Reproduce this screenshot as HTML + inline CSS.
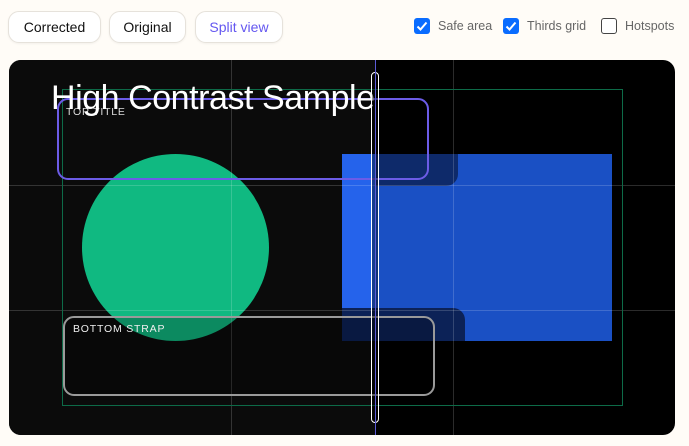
<!DOCTYPE html>
<html><head><style>
*{margin:0;padding:0;box-sizing:border-box}
body{width:689px;height:446px;background:#fffcf7;font-family:"Liberation Sans",sans-serif;position:relative;overflow:hidden}
.btn{position:absolute;top:11px;height:32px;border:1px solid #e6e2db;border-radius:11px;background:#fff;font-size:14px;line-height:30px;text-align:center;color:#111;box-shadow:0 1px 2px rgba(0,0,0,.05)}
.cb{position:absolute;top:18px;width:16px;height:16px;border-radius:3px}
.cb.on{background:#0a6cff}
.cb.off{border:1.5px solid #444;background:#fff}
.lbl{position:absolute;top:19px;font-size:12.5px;color:#666}
.a{position:absolute}
</style></head><body>
<div class="btn" style="left:8px;width:93px">Corrected</div>
<div class="btn" style="left:109px;width:77px">Original</div>
<div class="btn" style="left:195px;width:88px;color:#6457f0">Split view</div>
<div class="cb on" style="left:414px"><svg width="16" height="16"><path d="M3.5 8.5l3 3 6-7" stroke="#fff" stroke-width="2" fill="none"/></svg></div>
<div class="lbl" style="left:438px">Safe area</div>
<div class="cb on" style="left:503px"><svg width="16" height="16"><path d="M3.5 8.5l3 3 6-7" stroke="#fff" stroke-width="2" fill="none"/></svg></div>
<div class="lbl" style="left:527px">Thirds grid</div>
<div class="cb off" style="left:601px"></div>
<div class="lbl" style="left:625px">Hotspots</div>

<div class="a" style="left:9px;top:60px;width:666px;height:375px;border-radius:12px;overflow:hidden;background:#000">
  <div class="a" style="left:0;top:0;width:366px;height:375px;background:#0b0b0b"></div>
  <div class="a" style="left:73px;top:94px;width:187px;height:187px;border-radius:50%;background:#10b981"></div>
  <div class="a" style="left:333px;top:94px;width:270px;height:187px;background:#1a50c4"></div>
  <div class="a" style="left:333px;top:94px;width:33px;height:187px;background:#2563eb"></div>
  <div class="a" style="left:366px;top:94px;width:83px;height:32px;background:#0e2a6a;border-radius:0 0 12px 0"></div>
  <div class="a" style="left:333px;top:248px;width:123px;height:33px;background:#0c2257;border-radius:0 12px 0 0"></div>
  <div class="a" style="left:222px;top:0;width:1px;height:375px;background:rgba(255,255,255,.17)"></div>
  <div class="a" style="left:444px;top:0;width:1px;height:375px;background:rgba(255,255,255,.17)"></div>
  <div class="a" style="left:0;top:125px;width:666px;height:1px;background:rgba(255,255,255,.17)"></div>
  <div class="a" style="left:0;top:250px;width:666px;height:1px;background:rgba(255,255,255,.17)"></div>
  <div class="a" style="left:53px;top:29px;width:561px;height:317px;border:1px solid #0d6b48"></div>
  <div class="a" style="left:54px;top:256px;width:372px;height:80px;border:2px solid #9a9a9a;border-radius:11px;background:rgba(0,0,0,.25)"></div>
  <div class="a" style="left:64px;top:263px;font-size:10.5px;letter-spacing:.8px;color:#eee">BOTTOM STRAP</div>
  <div class="a" style="left:48px;top:38px;width:372px;height:82px;border:2px solid #6c5ce7;border-radius:11px"></div>
  <div class="a" style="left:57px;top:46px;font-size:10.5px;letter-spacing:.8px;color:#ddd">TOP TITLE</div>
  <div class="a" style="left:42px;top:19px;font-size:34px;color:#fff;letter-spacing:-.45px;white-space:nowrap">High Contrast Sample</div>
  <div class="a" style="left:365.5px;top:0;width:1.5px;height:375px;background:#5b5bd6"></div>
  <div class="a" style="left:362px;top:12px;width:8px;height:351px;border:1.5px solid #fff;border-radius:4px;background:rgba(0,0,0,.4)"></div>
  <div class="a" style="left:365.5px;top:12px;width:1px;height:351px;background:#5b5bd6"></div>
</div>
</body></html>
